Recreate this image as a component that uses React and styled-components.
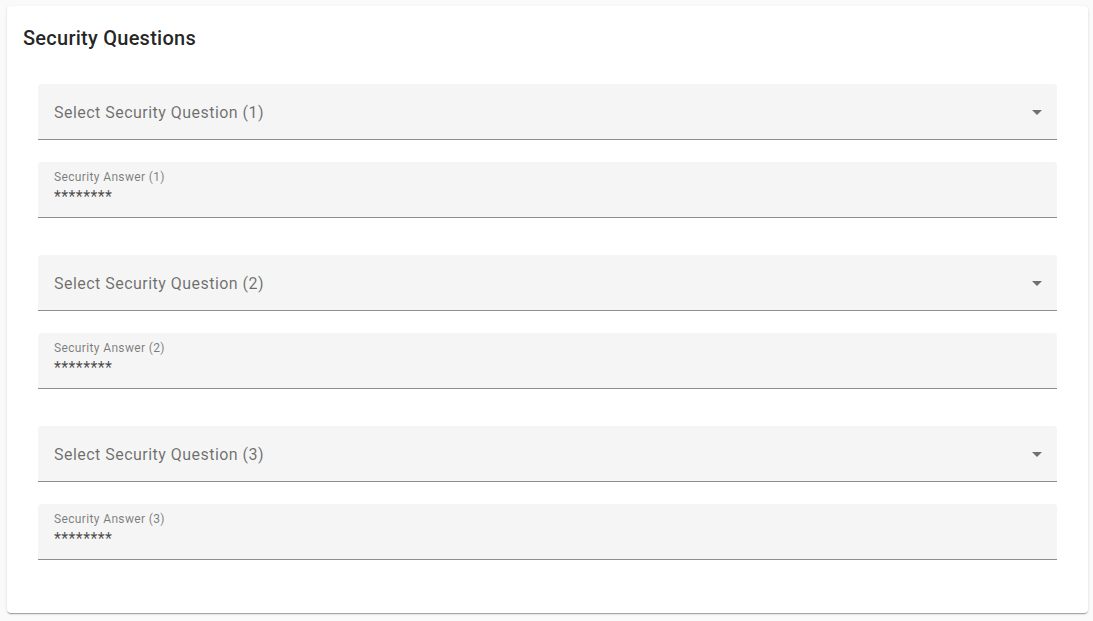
import styled, { createGlobalStyle } from "styled-components";

const GlobalStyle = createGlobalStyle`
  html, body {
    margin: 0;
    padding: 0;
    background: #fafafa;
    font-family: Roboto, "Liberation Sans", Arial, sans-serif;
  }
`

const Page = styled.div`
  padding: 6px 5px 8px 7px;
`

const Card = styled.div`
  background: #fff;
  border-radius: 4px;
  box-shadow: 0 2px 1px -1px rgba(0,0,0,0.2), 0 1px 1px 0 rgba(0,0,0,0.14), 0 1px 3px 0 rgba(0,0,0,0.12);
  padding: 16px;
  height: 607px;
  box-sizing: border-box;
`

const Title = styled.h2`
  margin: 0;
  font-size: 20px;
  font-weight: 500;
  line-height: 32px;
  letter-spacing: 0.25px;
  color: rgba(0,0,0,0.87);
`

const Fields = styled.div`
  padding: 30px 15px 0;
  display: flex;
  flex-direction: column;
  gap: 37px;
`

const Group = styled.div`
  display: flex;
  flex-direction: column;
  gap: 22px;
`

const Filled = styled.div`
  position: relative;
  height: 56px;
  box-sizing: border-box;
  background: #f5f5f5;
  border-radius: 4px 4px 0 0;
  border-bottom: 1px solid rgba(0,0,0,0.42);
  padding: ${p => (p.$select ? "2px 16px 0" : "0 16px")};
  display: flex;
  flex-direction: column;
  justify-content: ${p => (p.$select ? "center" : "flex-start")};
`

const Placeholder = styled.span`
  font-size: 16px;
  color: rgba(0,0,0,0.56);
  letter-spacing: 0.47px;
  line-height: 23px;
`

const Label = styled.span`
  font-size: 12px;
  color: rgba(0,0,0,0.5);
  line-height: 14px;
  margin-top: 8px;
  letter-spacing: 0.36px;
`

const Value = styled.span`
  font-size: 16px;
  color: rgba(0,0,0,0.7);
  line-height: 23px;
  margin-top: 1px;
  letter-spacing: 0.4px;
`

const Arrow = styled.svg`
  position: absolute;
  right: 8px;
  top: 16px;
  width: 24px;
  height: 24px;
  fill: rgba(0,0,0,0.54);
`

function Question({ n }) {
  return (
    <Group>
      <Filled $select>
        <Placeholder>Select Security Question ({n})</Placeholder>
        <Arrow viewBox="0 0 24 24"><path d="M7 10l5 5 5-5z" /></Arrow>
      </Filled>
      <Filled>
        <Label>Security Answer ({n})</Label>
        <Value>********</Value>
      </Filled>
    </Group>
  )
}

export default function App() {
  return (
    <>
      <GlobalStyle />
      <Page>
        <Card>
          <Title>Security Questions</Title>
          <Fields>
            {[1, 2, 3].map(n => <Question key={n} n={n} />)}
          </Fields>
        </Card>
      </Page>
    </>
  )
}
